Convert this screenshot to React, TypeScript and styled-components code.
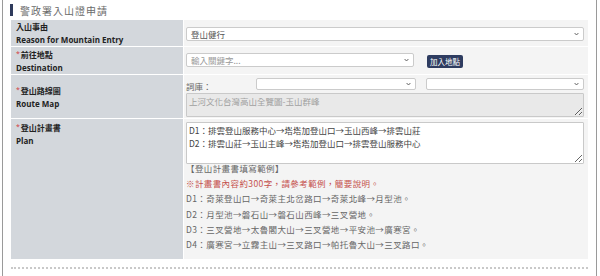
import React from "react";
import styled, { createGlobalStyle } from "styled-components";

const Global = createGlobalStyle`
  html, body { margin: 0; padding: 0; background: #fff; }
  body { font-family: "Open Sans", "Noto Sans CJK TC", sans-serif; }
  * { box-sizing: border-box; }
`;

const Frame = styled.div`
  margin: 0 3px 0 2px;
  width: 595px;
  height: 276px;
  border-left: 1px solid #9a9a9a;
  border-right: 1px solid #9a9a9a;
  padding: 0 8px;
  overflow: hidden;
`;

const TitleRow = styled.div`
  height: 20px;
  display: flex;
  align-items: center;
  gap: 7px;
`;

const TitleBar = styled.span`
  width: 3px;
  height: 12px;
  margin-left: -1px;
  background: #2f3b5c;
`;

const TitleText = styled.span`
  font-family: "Noto Sans CJK TC", sans-serif;
  font-size: 10px;
  letter-spacing: 1px;
  color: #6a6a6a;
`;

const Table = styled.div`
  display: flex;
  flex-direction: column;
  gap: 1px;
  background: #fff;
`;

const Row = styled.div`
  display: grid;
  grid-template-columns: 172px 1fr;
  column-gap: 1px;
`;

const Label = styled.div<{ $top?: boolean }>`
  background: #d3d7dc;
  padding: ${(p) => (p.$top ? "1px 5px 0" : "0 5px")};
  display: flex;
  flex-direction: column;
  justify-content: ${(p) => (p.$top ? "flex-start" : "center")};
  font-size: 8px;
  font-weight: 700;
  line-height: 13px;
  color: #222;
`;

const Star = styled.span`
  color: #d23a3a;
  font-weight: 400;
  font-size: 7px;
  margin-right: 1px;
  vertical-align: 2px;
`;

const Cell = styled.div<{ $pad: string }>`
  background: #f4f4f4;
  padding: ${(p) => p.$pad};
  display: flex;
  flex-direction: column;
`;

const Line = styled.div<{ $gap?: number }>`
  display: flex;
  align-items: flex-start;
  gap: ${(p) => p.$gap ?? 0}px;
`;

const SelectBox = styled.div<{ $w?: number; $h?: number }>`
  ${(p) => (p.$w ? `width: ${p.$w}px; flex: none;` : "flex: 1;")}
  height: ${(p) => p.$h ?? 14}px;
  background: #fff;
  border: 1px solid #cbcbcb;
  border-radius: 2px;
  display: flex;
  align-items: center;
  justify-content: space-between;
  padding: 0 4px;
  font-family: "Noto Sans CJK TC", sans-serif;
  font-size: 8.5px;
  color: #555;
`;

const Placeholder = styled.span`
  color: #999;
`;

const AddButton = styled.button`
  height: 13px;
  width: 36px;
  padding: 0;
  border: none;
  border-radius: 2px;
  background: #2e3c60;
  color: #fff;
  font-family: "Noto Sans CJK TC", sans-serif;
  font-size: 7.5px;
  line-height: 13px;
  margin-top: 2px;
`;

const DictLabel = styled.span`
  width: 70px;
  flex: none;
  font-family: "Noto Sans CJK TC", sans-serif;
  font-size: 8.5px;
  line-height: 12px;
  color: #666;
  padding-top: 2px;
`;

const SecondSelect = styled.div`
  flex: 1;
  display: flex;
  margin-left: 10px;
`;

const Spacer = styled.div`
  height: 1px;
`;

const TextBox = styled.textarea<{ $readonly?: boolean; $h: number }>`
  display: block;
  width: 100%;
  height: ${(p) => p.$h}px;
  margin: 0;
  border: 1px solid #c9c9c9;
  border-radius: 1px;
  background: ${(p) => (p.$readonly ? "#e9e9e9" : "#fff")};
  color: ${(p) => (p.$readonly ? "#a0a0a0" : "#444")};
  font-family: "Noto Sans CJK TC", sans-serif;
  font-size: 8.5px;
  line-height: 13px;
  padding: 1px 2px;
  resize: vertical;
  outline: none;
`;

const Examples = styled.div`
  margin-top: -3px;
  font-family: "Noto Sans CJK TC", sans-serif;
  font-size: 8.5px;
  line-height: 15.2px;
  letter-spacing: 0.4px;
  color: #666;
`;

const ExampleLine = styled.div<{ $red?: boolean }>`
  color: ${(p) => (p.$red ? "#c5504c" : "#666")};
  white-space: nowrap;
`;

const Divider = styled.div`
  margin-top: 8px;
  border-top: 2px dotted #c9c9c9;
`;

const Chevron = () => (
  <svg width="5" height="4" viewBox="0 0 5 4">
    <path d="M0.6 1 L2.5 3 L4.4 1" fill="none" stroke="#555" strokeWidth="0.9" />
  </svg>
);

const examples = [
  "D1：奇萊登山口→奇萊主北岔路口→奇萊北峰→月型池。",
  "D2：月型池→磐石山→磐石山西峰→三叉營地。",
  "D3：三叉營地→太魯閣大山→三叉營地→平安池→廣寒宮。",
  "D4：廣寒宮→立霧主山→三叉路口→帕托魯大山→三叉路口。",
];

export default function App() {
  return (
    <>
      <Global />
      <Frame>
        <TitleRow>
          <TitleBar />
          <TitleText>警政署入山證申請</TitleText>
        </TitleRow>
        <Table>
          <Row>
            <Label>
              <span>入山事由</span>
              <span>Reason for Mountain Entry</span>
            </Label>
            <Cell $pad="7px 4px 5px 2px">
              <SelectBox>
                <span>登山健行</span>
                <Chevron />
              </SelectBox>
            </Cell>
          </Row>
          <Row>
            <Label>
              <span>
                <Star>*</Star>前往地點
              </span>
              <span>Destination</span>
            </Label>
            <Cell $pad="6px 4px 6px 2px">
              <Line $gap={13}>
                <SelectBox $w={228}>
                  <Placeholder>輸入關鍵字...</Placeholder>
                  <Chevron />
                </SelectBox>
                <AddButton>加入地點</AddButton>
              </Line>
            </Cell>
          </Row>
          <Row>
            <Label>
              <span>
                <Star>*</Star>登山路線圖
              </span>
              <span>Route Map</span>
            </Label>
            <Cell $pad="3px 4px 1px 2px">
              <Line>
                <DictLabel>詞庫：</DictLabel>
                <SelectBox $w={160} $h={12}>
                  <span />
                  <Chevron />
                </SelectBox>
                <SecondSelect>
                  <SelectBox $h={12}>
                    <span />
                    <Chevron />
                  </SelectBox>
                </SecondSelect>
              </Line>
              <Spacer />
              <TextBox $readonly $h={24} readOnly value="上河文化台灣高山全覽圖-玉山群峰" />
            </Cell>
          </Row>
          <Row>
            <Label $top>
              <span>
                <Star>*</Star>登山計畫書
              </span>
              <span>Plan</span>
            </Label>
            <Cell $pad="3px 4px 7px 2px">
              <TextBox
                $h={42}
                readOnly
                value={"D1：排雲登山服務中心→塔塔加登山口→玉山西峰→排雲山莊\nD2：排雲山莊→玉山主峰→塔塔加登山口→排雲登山服務中心"}
              />
              <Examples>
                <ExampleLine>【登山計畫書填寫範例】</ExampleLine>
                <ExampleLine $red>※計畫書內容約300字，請參考範例，簡要說明。</ExampleLine>
                {examples.map((t) => (
                  <ExampleLine key={t}>{t}</ExampleLine>
                ))}
              </Examples>
            </Cell>
          </Row>
        </Table>
        <Divider />
      </Frame>
    </>
  );
}
